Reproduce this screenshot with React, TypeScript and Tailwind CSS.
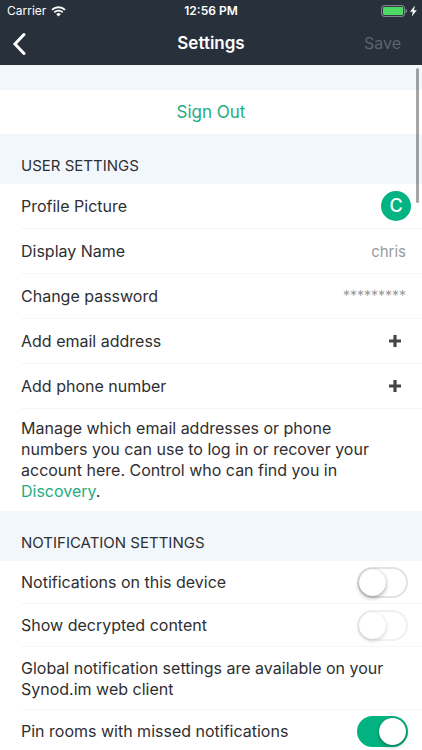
import { ReactNode, useState } from 'react';
import { cva } from 'class-variance-authority';
import clsx from 'clsx';

const switchVariants = cva(
  'h-[31px] w-[51px] shrink-0 appearance-none rounded-full border-2',
  {
    variants: {
      checked: {
        true: 'border-[#03b381] bg-[#03b381]',
        false: 'border-[#e3e3e3] bg-white',
      },
      disabled: {
        true: 'opacity-50',
        false: '',
      },
    },
  }
);

interface SwitchProps {
  id: string;
  checked: boolean;
  disabled?: boolean;
  onChange?: (checked: boolean) => void;
}

const Switch = ({ id, checked, disabled = false, onChange }: SwitchProps) => (
  <span className="relative flex shrink-0">
    <input
      id={id}
      type="checkbox"
      role="switch"
      checked={checked}
      disabled={disabled}
      onChange={(event) => onChange?.(event.target.checked)}
      className={switchVariants({ checked, disabled })}
    />
    <span
      aria-hidden="true"
      className={clsx(
        'pointer-events-none absolute top-[2px] h-[27px] w-[27px] rounded-full bg-white',
        checked ? 'right-[2px]' : 'left-[2px]',
        disabled
          ? 'shadow-[0_2px_4px_rgba(0,0,0,0.14),0_0_1px_rgba(0,0,0,0.15)]'
          : 'shadow-[0_2px_4px_rgba(0,0,0,0.3),0_0_1px_rgba(0,0,0,0.3)]'
      )}
    />
  </span>
);

const WifiIcon = () => (
  <svg width="15" height="11" viewBox="0 0 15 11" fill="none" stroke="#fff" aria-hidden="true">
    <path d="M1 3.9a9.2 9.2 0 0 1 13 0" strokeWidth="2" />
    <path d="M3.3 6.3a6 6 0 0 1 8.4 0" strokeWidth="1.8" />
    <path d="M7.5 10.6 5.2 8.2a3.3 3.3 0 0 1 4.6 0z" fill="#fff" stroke="none" />
  </svg>
);

const BatteryIcon = () => (
  <svg width="37" height="12" viewBox="0 0 37 12" aria-hidden="true">
    <rect x="0.6" y="0.6" width="23" height="10.8" rx="2.6" fill="none" stroke="#8d9197" strokeWidth="1" />
    <rect x="2" y="2" width="20.2" height="8" rx="1.2" fill="#4cd964" />
    <path d="M24.6 4v4c.9-.3 1.4-1.1 1.4-2s-.5-1.7-1.4-2z" fill="#8d9197" />
    <path d="M34 .6 29 6.8h2.8l-1 4.8 5-6.400h-2.900z" fill="#fff" />
  </svg>
);

const BackIcon = () => (
  <svg width="14" height="24" viewBox="0 0 14 24" fill="none" aria-hidden="true">
    <path d="M12 2.500 3 12l9 9.500" stroke="#fff" strokeWidth="3" strokeLinecap="round" />
  </svg>
);

const PlusIcon = () => (
  <svg width="12" height="12" viewBox="0 0 12 12" aria-hidden="true">
    <path d="M4.4 0h3.2v4.4H12v3.2H7.6V12H4.4V7.6H0V4.4h4.4z" fill="#454545" />
  </svg>
);

const SectionTitle = ({ children }: { children: ReactNode }) => (
  <h2 className="flex h-[50px] items-end bg-[#f2f7fc] px-[21px] pb-2 text-[15px] leading-5">
    {children}
  </h2>
);

const Divider = () => <div className="ml-[21px] h-px bg-[#f5f5f5]" />;

const rowClass = 'flex h-11 w-full items-center justify-between pl-[21px] text-left';
const switchRowClass = 'flex h-[42px] items-center justify-between pr-[14px] pl-[21px]';

const App = () => {
  const [name, setName] = useState('chris');
  const [notify, setNotify] = useState(false);
  const [pinMissed, setPinMissed] = useState(true);

  return (
    <div className="flex h-screen flex-col overflow-hidden bg-white font-['Inter',sans-serif] text-base leading-[21px] text-[#2e2f32]">
      <header className="shrink-0 bg-[#27303b] text-white">
        <div className="grid h-[22px] grid-cols-[1fr_auto_1fr] items-center px-1 text-xs leading-4">
          <span className="flex items-center gap-[5px] pl-[3px]">
            Carrier
            <WifiIcon />
          </span>
          <span className="font-semibold">12:56 PM</span>
          <span className="flex justify-end">
            <BatteryIcon />
          </span>
        </div>
        <div className="grid h-[43px] grid-cols-[1fr_auto_1fr] items-center px-3">
          <button type="button" aria-label="Back" className="w-fit">
            <BackIcon />
          </button>
          <h1 className="text-[17px] font-semibold">Settings</h1>
          <button type="button" disabled className="justify-self-end pr-[9px] text-[#5d646d]">
            Save
          </button>
        </div>
      </header>

      <div className="relative min-h-0 flex-1">
        <main className="h-full overflow-y-auto [scrollbar-width:none]">
          <div className="h-[25px] bg-[#f2f7fc]" />
          <button type="button" className="h-11 w-full text-center text-[17px] text-[#1fac80]">
            Sign Out
          </button>

          <section>
            <SectionTitle>USER SETTINGS</SectionTitle>
            <button type="button" className={clsx(rowClass, 'pr-[11px]')}>
              Profile Picture
              <span className="flex h-[30px] w-[30px] items-center justify-center rounded-full bg-[#03b381] text-lg font-medium text-white">
                C
              </span>
            </button>
            <Divider />
            <div className={clsx(rowClass, 'pr-4')}>
              <label htmlFor="display-name">Display Name</label>
              <input
                id="display-name"
                type="text"
                value={name}
                onChange={(event) => setName(event.target.value)}
                className="w-40 text-right text-[15px] text-[#9a9a9a] outline-none"
              />
            </div>
            <Divider />
            <button type="button" className={clsx(rowClass, 'pr-4')}>
              Change password
              <span className="text-sm text-[#9a9a9a]">*********</span>
            </button>
            <Divider />
            <button type="button" className={clsx(rowClass, 'pr-[21px]')}>
              Add email address
              <PlusIcon />
            </button>
            <Divider />
            <button type="button" className={clsx(rowClass, 'pr-[21px]')}>
              Add phone number
              <PlusIcon />
            </button>
            <Divider />
            <p className="px-[21px] py-[9px]">
              Manage which email addresses or phone numbers you can use to log in
              or recover your account here. Control who can find you in{' '}
              <a href="#discovery" className="text-[#1fac80]">
                Discovery
              </a>
              .
            </p>
          </section>

          <section>
            <SectionTitle>NOTIFICATION SETTINGS</SectionTitle>
            <div className={switchRowClass}>
              <label htmlFor="notify">Notifications on this device</label>
              <Switch id="notify" checked={notify} onChange={setNotify} />
            </div>
            <Divider />
            <div className={switchRowClass}>
              <label htmlFor="decrypted">Show decrypted content</label>
              <Switch id="decrypted" checked={false} disabled />
            </div>
            <Divider />
            <p className="px-[21px] pt-[11px] pb-[9px]">
              Global notification settings are available on your Synod.im web
              client
            </p>
            <Divider />
            <div className={switchRowClass}>
              <label htmlFor="pin-missed">Pin rooms with missed notifications</label>
              <Switch id="pin-missed" checked={pinMissed} onChange={setPinMissed} />
            </div>
          </section>
        </main>
        {/* scroll indicator */}
        <div
          aria-hidden="true"
          className="pointer-events-none absolute top-[3px] right-[3px] h-[135px] w-[3px] rounded-full bg-black/35"
        />
      </div>
    </div>
  );
};

export default App;
